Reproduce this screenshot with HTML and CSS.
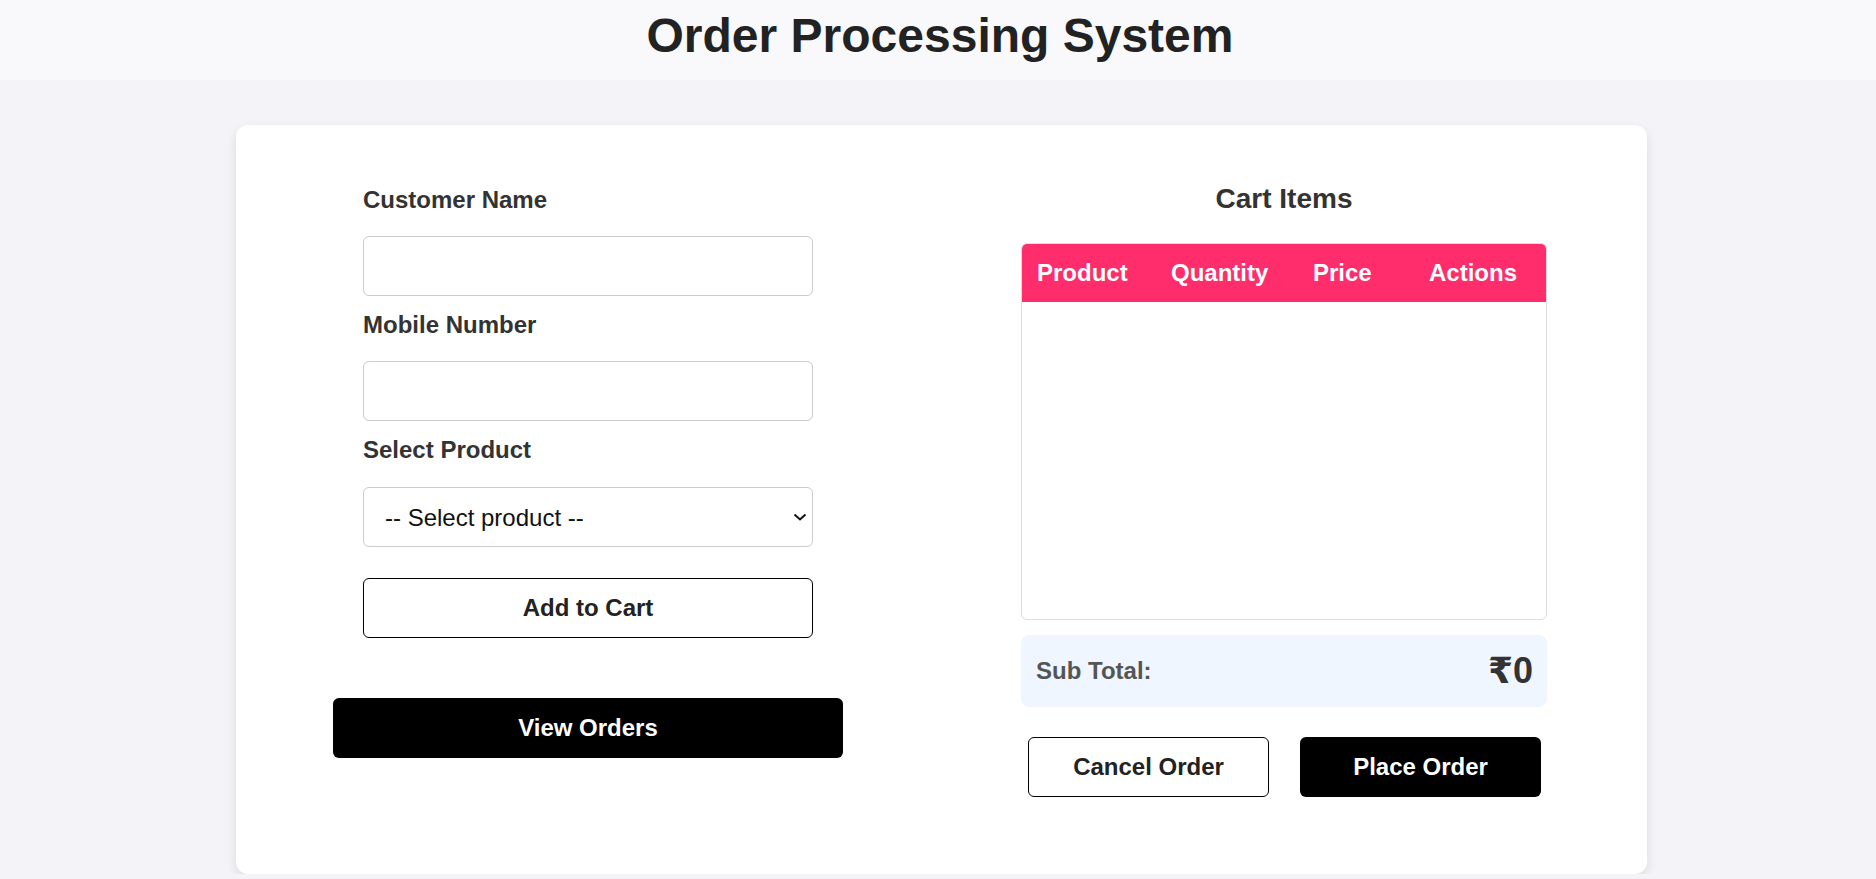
FILE: index.html
```html
<!DOCTYPE html>
<html lang="en">
<head>
<meta charset="utf-8">
<title>Order Processing System</title>
<link rel="stylesheet" href="styles.css">
</head>
<body>
<header class="page-header">
  <h1 class="page-title">Order Processing System</h1>
</header>
<main class="card">
  <section class="form-col">
    <div class="form-fields">
      <label class="field-label" for="cname">Customer Name</label>
      <input class="field-input" id="cname" type="text">
      <label class="field-label" for="mobile">Mobile Number</label>
      <input class="field-input" id="mobile" type="text">
      <label class="field-label" for="product">Select Product</label>
      <div class="select-wrap">
        <select class="field-select" id="product">
          <option>-- Select product --</option>
        </select>
        <svg class="select-chevron" width="14" height="8" viewBox="0 0 14 8"><path d="M1.5 1.5 L7 6.5 L12.5 1.5" fill="none" stroke="#111" stroke-width="2"/></svg>
      </div>
      <button class="btn btn-outline btn-add">Add to Cart</button>
    </div>
    <button class="btn btn-dark btn-view">View Orders</button>
  </section>
  <section class="cart-col">
    <h2 class="cart-title">Cart Items</h2>
    <div class="cart-table-wrap">
      <table class="cart-table">
        <colgroup>
          <col class="c1"><col class="c2"><col class="c3"><col class="c4">
        </colgroup>
        <thead>
          <tr><th>Product</th><th>Quantity</th><th>Price</th><th>Actions</th></tr>
        </thead>
        <tbody></tbody>
      </table>
    </div>
    <div class="subtotal">
      <span class="subtotal-label">Sub Total:</span>
      <span class="subtotal-value">₹0</span>
    </div>
    <div class="cart-actions">
      <button class="btn btn-outline btn-half">Cancel Order</button>
      <button class="btn btn-dark btn-half">Place Order</button>
    </div>
  </section>
</main>
</body>
</html>
```
FILE: styles.css
```css
* { box-sizing: border-box; }
html, body { margin: 0; padding: 0; }
body {
  background: #f4f4f8;
  font-family: "Liberation Sans", Arial, sans-serif;
  color: #333;
}
.page-header {
  background: #f9f9fb;
  height: 80px;
  padding-top: 8px;
  padding-left: 4px;
}
.page-title {
  margin: 0;
  text-align: center;
  font-size: 48px;
  line-height: 56px;
  font-weight: 700;
  color: #222;
}
.card {
  width: 1411px;
  margin: 45px 0 0 236px;
  background: #fff;
  border-radius: 12px;
  box-shadow: 0 5px 12px rgba(0,0,0,0.1);
  display: flex;
  align-items: flex-start;
  padding: 58px 0 77px 97px;
  gap: 178px;
}
.form-col {
  width: 510px;
  padding-top: 3px;
  display: flex;
  flex-direction: column;
  align-items: center;
}
.form-fields {
  width: 450px;
  display: flex;
  flex-direction: column;
}
.field-label {
  font-size: 24px;
  line-height: 28px;
  font-weight: 700;
  color: #333;
  margin-bottom: 22px;
}
.field-input, .field-select {
  width: 450px;
  height: 60px;
  border: 1px solid #ccc;
  border-radius: 6px;
  background: #fff;
  font-family: "Liberation Sans", Arial, sans-serif;
  font-size: 24px;
  margin: 0 0 15px 0;
  padding: 0 16px;
}
.select-wrap {
  position: relative;
  height: 60px;
  margin-top: 1px;
}
.field-select {
  appearance: none;
  -webkit-appearance: none;
  color: #111;
  padding-left: 21px;
  margin: 0;
}
.select-chevron {
  position: absolute;
  right: 6px;
  top: 26px;
  pointer-events: none;
}
.btn {
  font-family: "Liberation Sans", Arial, sans-serif;
  font-size: 24px;
  font-weight: 700;
  height: 60px;
  border-radius: 6px;
  cursor: pointer;
}
.btn-outline {
  background: #fff;
  color: #222;
  border: 1px solid #000;
}
.btn-dark {
  background: #000;
  color: #fff;
  border: none;
}
.btn-add {
  width: 450px;
  margin-top: 31px;
}
.btn-view {
  width: 510px;
  margin-top: 60px;
}
.cart-col {
  width: 526px;
  display: flex;
  flex-direction: column;
}
.cart-title {
  margin: 0 0 28px;
  text-align: center;
  font-size: 28px;
  line-height: 32px;
  font-weight: 700;
  color: #333;
}
.cart-table-wrap {
  height: 377px;
  border: 1px solid #ddd;
  border-radius: 6px;
  overflow: hidden;
}
.cart-table {
  width: 100%;
  border-collapse: collapse;
  table-layout: fixed;
}
.cart-table col.c1 { width: 134px; }
.cart-table col.c2 { width: 142px; }
.cart-table col.c3 { width: 116px; }
.cart-table col.c4 { width: 132px; }
.cart-table th {
  background: #ff2d6b;
  color: #fff;
  font-size: 24px;
  font-weight: 700;
  text-align: left;
  height: 58px;
  padding: 0 0 0 15px;
}
.subtotal {
  margin-top: 15px;
  height: 72px;
  background: #eff6ff;
  border-radius: 8px;
  display: flex;
  align-items: center;
  justify-content: space-between;
  padding: 0 14px 0 15px;
}
.subtotal-label {
  font-size: 24px;
  font-weight: 700;
  color: #555;
}
.subtotal-value {
  font-family: "Liberation Sans", "DejaVu Sans", sans-serif;
  font-size: 36px;
  font-weight: 700;
  color: #333;
}
.cart-actions {
  margin-top: 30px;
  display: flex;
  justify-content: center;
  gap: 31px;
  padding-left: 1px;
}
.btn-half {
  width: 241px;
}
```
